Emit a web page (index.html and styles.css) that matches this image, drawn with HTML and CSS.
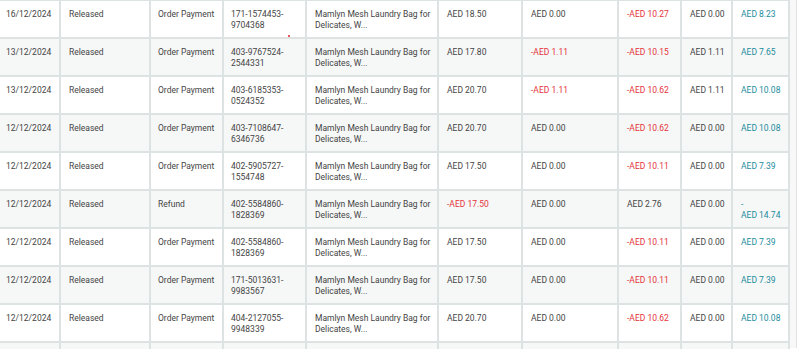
FILE: index.html
```html
<!DOCTYPE html>
<html lang="en">
<head>
<meta charset="utf-8">
<title>Transactions</title>
<link rel="stylesheet" href="styles.css">
</head>
<body>
<div class="page">
  <div class="panel">
    <table class="tx">
      <colgroup>
        <col class="c1"><col class="c2"><col class="c3"><col class="c4"><col class="c5">
        <col class="c6"><col class="c7"><col class="c8"><col class="c9"><col class="c10">
      </colgroup>
      <tbody>
        <tr>
          <td class="first">16/12/2024</td><td>Released</td><td class="type">Order Payment</td>
          <td class="oid">171-1574453-<br>9704368</td>
          <td>Mamlyn Mesh Laundry Bag for Delicates, W...</td>
          <td>AED 18.50</td><td>AED 0.00</td><td class="neg">-AED 10.27</td><td>AED 0.00</td><td class="tot">AED 8.23</td>
        </tr>
        <tr>
          <td class="first">13/12/2024</td><td>Released</td><td class="type">Order Payment</td>
          <td class="oid">403-9767524-<br>2544331</td>
          <td>Mamlyn Mesh Laundry Bag for Delicates, W...</td>
          <td>AED 17.80</td><td class="neg">-AED 1.11</td><td class="neg">-AED 10.15</td><td>AED 1.11</td><td class="tot">AED 7.65</td>
        </tr>
        <tr>
          <td class="first">13/12/2024</td><td>Released</td><td class="type">Order Payment</td>
          <td class="oid">403-6185353-<br>0524352</td>
          <td>Mamlyn Mesh Laundry Bag for Delicates, W...</td>
          <td>AED 20.70</td><td class="neg">-AED 1.11</td><td class="neg">-AED 10.62</td><td>AED 1.11</td><td class="tot">AED 10.08</td>
        </tr>
        <tr>
          <td class="first">12/12/2024</td><td>Released</td><td class="type">Order Payment</td>
          <td class="oid">403-7108647-<br>6346736</td>
          <td>Mamlyn Mesh Laundry Bag for Delicates, W...</td>
          <td>AED 20.70</td><td>AED 0.00</td><td class="neg">-AED 10.62</td><td>AED 0.00</td><td class="tot">AED 10.08</td>
        </tr>
        <tr>
          <td class="first">12/12/2024</td><td>Released</td><td class="type">Order Payment</td>
          <td class="oid">402-5905727-<br>1554748</td>
          <td>Mamlyn Mesh Laundry Bag for Delicates, W...</td>
          <td>AED 17.50</td><td>AED 0.00</td><td class="neg">-AED 10.11</td><td>AED 0.00</td><td class="tot">AED 7.39</td>
        </tr>
        <tr>
          <td class="first">12/12/2024</td><td>Released</td><td class="type">Refund</td>
          <td class="oid">402-5584860-<br>1828369</td>
          <td>Mamlyn Mesh Laundry Bag for Delicates, W...</td>
          <td class="neg">-AED 17.50</td><td>AED 0.00</td><td>AED 2.76</td><td>AED 0.00</td><td class="tot">-<br>AED 14.74</td>
        </tr>
        <tr>
          <td class="first">12/12/2024</td><td>Released</td><td class="type">Order Payment</td>
          <td class="oid">402-5584860-<br>1828369</td>
          <td>Mamlyn Mesh Laundry Bag for Delicates, W...</td>
          <td>AED 17.50</td><td>AED 0.00</td><td class="neg">-AED 10.11</td><td>AED 0.00</td><td class="tot">AED 7.39</td>
        </tr>
        <tr>
          <td class="first">12/12/2024</td><td>Released</td><td class="type">Order Payment</td>
          <td class="oid">171-5013631-<br>9983567</td>
          <td>Mamlyn Mesh Laundry Bag for Delicates, W...</td>
          <td>AED 17.50</td><td>AED 0.00</td><td class="neg">-AED 10.11</td><td>AED 0.00</td><td class="tot">AED 7.39</td>
        </tr>
        <tr>
          <td class="first">12/12/2024</td><td>Released</td><td class="type">Order Payment</td>
          <td class="oid">404-2127055-<br>9948339</td>
          <td>Mamlyn Mesh Laundry Bag for Delicates, W...</td>
          <td>AED 20.70</td><td>AED 0.00</td><td class="neg">-AED 10.62</td><td>AED 0.00</td><td class="tot">AED 10.08</td>
        </tr>
        <tr>
          <td class="first"></td><td></td><td></td><td></td><td></td><td></td><td></td><td></td><td></td><td></td>
        </tr>
      </tbody>
    </table>
  </div>
  <span class="dot"></span>
</div>
</body>
</html>
```

FILE: styles.css
```css
html, body {
  margin: 0;
  padding: 0;
  background: #ffffff;
  overflow: hidden;
}

.page {
  position: relative;
  width: 800px;
  height: 349px;
  overflow: hidden;
  font-family: Roboto, "Liberation Sans", Arial, sans-serif;
  font-size: 8.5px;
  line-height: 11.3px;
  color: #444444;
}

.panel {
  width: 797px;
  height: 100%;
  background: #f8f8f8;
  border-right: 1px solid #e2e2e2;
  box-sizing: border-box;
}

.tx {
  table-layout: fixed;
  width: 790px;
  border-collapse: separate;
  border-spacing: 0;
  margin-top: -1px;
  border-top: 2px solid #dde3e3;
  background: #ffffff;
}

.c1 { width: 61px; }
.c2 { width: 90px; }
.c3 { width: 73px; }
.c4 { width: 83px; }
.c5 { width: 132px; }
.c6 { width: 84px; }
.c7 { width: 96px; }
.c8 { width: 63px; }
.c9 { width: 51px; }
.c10 { width: 57px; }

.tx tr {
  height: 38px;
}

.tx tr:nth-child(even) td {
  background: #f6f7f7;
}

.tx td {
  vertical-align: top;
  padding: 8px 3px 0 8px;
  border-right: 2px solid #dde3e3;
  border-bottom: 2px solid #dde3e3;
  overflow: hidden;
}

.tx td.first {
  padding-left: 6px;
}

.tx td.type {
  padding-left: 7px;
}

.tx td.oid {
  padding-left: 7px;
}

.neg {
  color: #e5343a;
}

.tot {
  color: #228c9c;
}

.dot {
  position: absolute;
  left: 288px;
  top: 35px;
  width: 2px;
  height: 2px;
  background: #e0202a;
  border-radius: 1px;
}
```
